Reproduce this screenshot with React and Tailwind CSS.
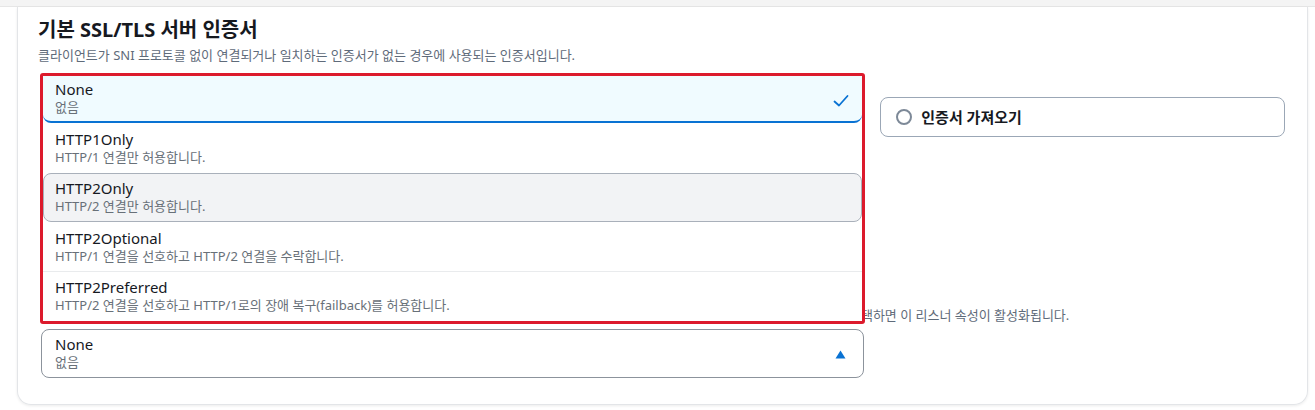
const options = [
  { value: "None", label: "없음" },
  { value: "HTTP1Only", label: "HTTP/1 연결만 허용합니다." },
  { value: "HTTP2Only", label: "HTTP/2 연결만 허용합니다." },
  { value: "HTTP2Optional", label: "HTTP/1 연결을 선호하고 HTTP/2 연결을 수락합니다." },
  { value: "HTTP2Preferred", label: "HTTP/2 연결을 선호하고 HTTP/1로의 장애 복구(failback)를 허용합니다." },
];

function CheckIcon() {
  return (
    <svg width="18" height="16" viewBox="0 0 18 16" fill="none">
      <path d="M2.5 8.5 L7 12.5 L15.5 3" stroke="#0972d3" strokeWidth="1.8" strokeLinecap="round" strokeLinejoin="round" />
    </svg>
  );
}

function CaretUp() {
  return (
    <svg width="11" height="9" viewBox="0 0 11 9">
      <path d="M5.5 0.5 L10.5 8.5 L0.5 8.5 Z" fill="#0972d3" />
    </svg>
  );
}

function OptionText({ value, label }) {
  return (
    <div>
      <p className="text-[15px] leading-[20px] text-[#16191f]">{value}</p>
      <p className="text-[13px] leading-[16px] text-[#687078]">{label}</p>
    </div>
  );
}

function Dropdown() {
  return (
    <div className="absolute bottom-[calc(100%+5px)] left-[-1px] z-10 h-[251px] w-[825px] rounded-[3px] border-[3px] border-[#dc1a2c] bg-white">
      <div className="flex h-[47px] items-start justify-between rounded-b-lg border-b-2 border-[#0972d3] bg-[#f0fbff] pl-[12px] pr-[12px] pt-[3px]">
        <OptionText {...options[0]} />
        <div className="mt-[14px]">
          <CheckIcon />
        </div>
      </div>
      <div className="h-[50px] pl-[12px] pt-[6px]">
        <OptionText {...options[1]} />
      </div>
      <div className="h-[49px] rounded-lg border border-[#a9b0ba] bg-[#f2f3f5] pl-[11px] pt-[4px]">
        <OptionText {...options[2]} />
      </div>
      <div className="h-[49px] pl-[12px] pt-[6px]">
        <OptionText {...options[3]} />
      </div>
      <div className="h-[50px] border-t border-[#e9ebed] pl-[12px] pt-[5px]">
        <OptionText {...options[4]} />
      </div>
    </div>
  );
}

export default function App() {
  return (
    <div className="h-[410px] w-[1315px] overflow-hidden bg-white font-['Noto_Sans','Noto_Sans_CJK_KR',sans-serif]">
      <div className="h-[7px] border-b border-[#e6e6e6] bg-[#f4f4f4]" />
      <div className="ml-[17px] mr-[7px] h-[398px] rounded-b-[14px] border border-t-0 border-[#e3e5e8] pl-[20px] pr-[22px] pt-[11px] shadow-[0_1px_3px_rgba(0,0,0,0.08)]">
        <h2 className="text-[20px] font-bold leading-[24px] text-[#16191f]">기본 SSL/TLS 서버 인증서</h2>
        <p className="mt-[5px] text-[13px] leading-[16px] text-[#5f6b7a]">
          클라이언트가 SNI 프로토콜 없이 연결되거나 일치하는 인증서가 없는 경우에 사용되는 인증서입니다.
        </p>

        <div className="ml-[3px] mt-[34px] flex gap-[18px]">
          <div className="flex h-[40px] w-[822px] items-center rounded-lg border border-[#9ba7b6] px-[14px]">
            <span className="h-[16px] w-[16px] rounded-full border-2 border-[#0972d3]" />
            <span className="ml-[9px] text-[15px] font-semibold text-[#16191f]">ACM에서</span>
          </div>
          <div className="flex h-[40px] w-[405px] items-center rounded-lg border border-[#9ba7b6] px-[15px]">
            <span className="h-[16px] w-[16px] rounded-full border-2 border-[#7d8998]" />
            <span className="ml-[9px] text-[15px] font-semibold text-[#16191f]">인증서 가져오기</span>
          </div>
        </div>

        <p className="ml-[3px] mt-[170px] whitespace-nowrap text-[13px] leading-[16px] text-[#5f6b7a]">
          애플리케이션 계층 프로토콜 협상(ALPN)은 TLS 핸드셰이크의 일부로서 프로토콜을 협상하는 TLS 확장 기능입니다. TLS 리스너에 대해서 ALPN 정책을 선택하면 이 리스너 속성이 활성화됩니다.
        </p>

        <div className="relative ml-[3px] mt-[6px] w-[823px]">
          <Dropdown />
          <div className="flex h-[49px] items-start justify-between rounded-lg border border-[#8c939c] pl-[13px] pr-[17px] pt-[4px]">
            <OptionText {...options[0]} />
            <div className="mt-[16px]">
              <CaretUp />
            </div>
          </div>
        </div>
      </div>
    </div>
  );
}
